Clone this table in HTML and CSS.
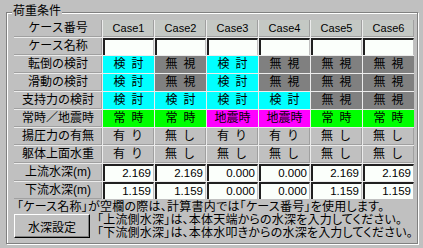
FILE: index.html
```html
<!DOCTYPE html>
<html lang="ja">
<head>
<meta charset="utf-8">
<link rel="stylesheet" href="styles.css">
</head>
<body>
<div class="group">
  <div class="legend">荷重条件</div>
  <div class="grid">
    <div class="cell lbl">ケース番号</div>
    <div class="cell hdr">Case1</div><div class="cell hdr">Case2</div><div class="cell hdr">Case3</div><div class="cell hdr">Case4</div><div class="cell hdr">Case5</div><div class="cell hdr">Case6</div>

    <div class="cell lbl">ケース名称</div>
    <div class="cell inp"></div><div class="cell inp"></div><div class="cell inp"></div><div class="cell inp"></div><div class="cell inp"></div><div class="cell inp"></div>

    <div class="cell lbl">転倒の検討</div>
    <div class="cell cyan">検&ensp;討</div><div class="cell dark">無&ensp;視</div><div class="cell cyan">検&ensp;討</div><div class="cell dark">無&ensp;視</div><div class="cell dark">無&ensp;視</div><div class="cell dark">無&ensp;視</div>

    <div class="cell lbl">滑動の検討</div>
    <div class="cell cyan">検&ensp;討</div><div class="cell dark">無&ensp;視</div><div class="cell cyan">検&ensp;討</div><div class="cell dark">無&ensp;視</div><div class="cell dark">無&ensp;視</div><div class="cell dark">無&ensp;視</div>

    <div class="cell lbl">支持力の検討</div>
    <div class="cell cyan">検&ensp;討</div><div class="cell cyan">検&ensp;討</div><div class="cell cyan">検&ensp;討</div><div class="cell cyan">検&ensp;討</div><div class="cell dark">無&ensp;視</div><div class="cell dark">無&ensp;視</div>

    <div class="cell lbl">常時／地震時</div>
    <div class="cell green">常&ensp;時</div><div class="cell green">常&ensp;時</div><div class="cell magenta">地震時</div><div class="cell magenta">地震時</div><div class="cell green">常&ensp;時</div><div class="cell green">常&ensp;時</div>

    <div class="cell lbl">揚圧力の有無</div>
    <div class="cell gray">有&ensp;り</div><div class="cell gray">無&ensp;し</div><div class="cell gray">有&ensp;り</div><div class="cell gray">有&ensp;り</div><div class="cell gray">無&ensp;し</div><div class="cell gray">無&ensp;し</div>

    <div class="cell lbl">躯体上面水重</div>
    <div class="cell gray">有&ensp;り</div><div class="cell gray">無&ensp;し</div><div class="cell gray">無&ensp;し</div><div class="cell gray">無&ensp;し</div><div class="cell gray">無&ensp;し</div><div class="cell gray">無&ensp;し</div>

    <div class="cell lbl">上流水深(m)</div>
    <div class="cell inp num">2.169</div><div class="cell inp num">2.169</div><div class="cell inp num">0.000</div><div class="cell inp num">0.000</div><div class="cell inp num">2.169</div><div class="cell inp num">2.169</div>

    <div class="cell lbl">下流水深(m)</div>
    <div class="cell inp num">1.159</div><div class="cell inp num">1.159</div><div class="cell inp num">0.000</div><div class="cell inp num">0.000</div><div class="cell inp num">1.159</div><div class="cell inp num">1.159</div>
  </div>
  <div class="note1">「ケース名称」が空欄の際は、計算書内では「ケース番号」を使用します。</div>
  <div class="bottom">
    <div class="btn">水深設定</div>
    <div class="notes">
      <div>「上流側水深」は、本体天端からの水深を入力してください。</div>
      <div>「下流側水深」は、本体水叩きからの水深を入力してください。</div>
    </div>
  </div>
</div>
</body>
</html>
```

FILE: styles.css
```css
html, body {
  margin: 0;
  padding: 0;
  background: #c0c0c0;
}
body {
  width: 423px;
  height: 248px;
  overflow: hidden;
  font-family: "Liberation Sans", "Noto Sans CJK JP", sans-serif;
  font-size: 12px;
  color: #000;
}
.group {
  position: relative;
  box-sizing: border-box;
  margin: 12px 0 0 6px;
  width: 412px;
  height: 232px;
  border: 1px solid #808080;
  box-shadow: inset 1px 1px 0 #fff, 1px 1px 0 #fff;
  padding: 7px 0 0 7px;
}
.legend {
  position: absolute;
  left: 5px;
  top: -10px;
  padding: 0 1px;
  background: #c0c0c0;
  font-size: 12px;
  line-height: 17px;
}
.grid {
  display: grid;
  grid-template-columns: 88px repeat(6, 51px);
  grid-auto-rows: 17px;
  gap: 1px;
  width: 400px;
  background: #ececec;
}
.cell {
  display: flex;
  align-items: center;
  justify-content: center;
  line-height: 17px;
  white-space: nowrap;
  box-sizing: border-box;
  overflow: hidden;
  font-size: 12px;
}
.lbl {
  background: #c0c0c0;
  border-right: 1px solid #a0a0a0;
  border-bottom: 1px solid #a0a0a0;
  padding-left: 1px;
}
.hdr {
  background: #c4c8c4;
  border-right: 1px solid #a0a0a0;
  border-bottom: 1px solid #a0a0a0;
  font-size: 11px;
  padding-left: 1px;
}
.inp {
  background: #fbfffb;
  border-top: 2px solid #202020;
  border-left: 2px solid #202020;
  border-right: 1px solid #c0c0c0;
}
.num {
  justify-content: flex-end;
  padding-right: 2px;
  font-size: 11.5px;
}
.cyan { background: #00ffff; }
.dark { background: #808080; }
.green { background: #00ff00; }
.magenta { background: #ff00ff; }
.gray { background: #c0c0c0; border-right: 1px solid #a0a0a0; border-bottom: 1px solid #a0a0a0; }
.note1 {
  margin: 2px 0 0 3px;
  line-height: 13px;
  font-size: 12px;
  font-feature-settings: "palt";
  letter-spacing: 0.25px;
}
.bottom {
  display: flex;
  align-items: flex-start;
}
.btn {
  box-sizing: border-box;
  width: 76px;
  height: 24px;
  display: flex;
  align-items: center;
  justify-content: center;
  background: #c0c0c0;
  border: 1px solid;
  border-color: #fff #000 #000 #fff;
  box-shadow: inset -1px -1px 0 #808080;
  font-size: 12px;
}
.notes {
  margin-left: 7px;
  line-height: 13px;
  font-size: 12px;
  font-feature-settings: "palt";
  letter-spacing: 0.2px;
}
```
